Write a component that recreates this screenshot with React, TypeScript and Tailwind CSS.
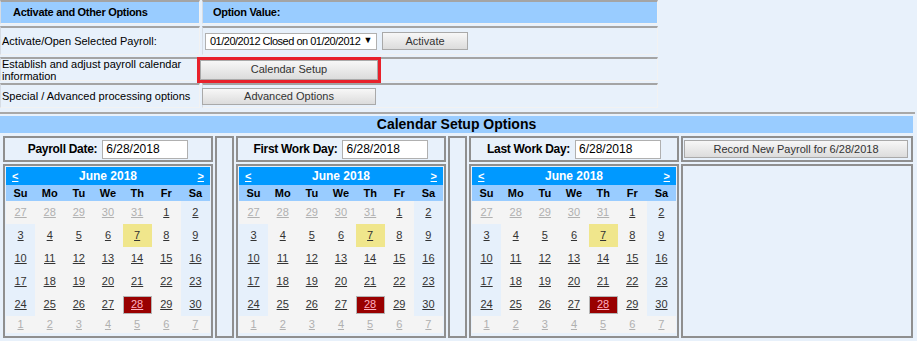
import React from 'react';

const weeks: number[][] = [
  [27, 28, 29, 30, 31, 1, 2],
  [3, 4, 5, 6, 7, 8, 9],
  [10, 11, 12, 13, 14, 15, 16],
  [17, 18, 19, 20, 21, 22, 23],
  [24, 25, 26, 27, 28, 29, 30],
  [1, 2, 3, 4, 5, 6, 7],
];
const dows = ['Su', 'Mo', 'Tu', 'We', 'Th', 'Fr', 'Sa'];

const Button = ({ label, className = '' }: { label: string; className?: string }) => (
  <button
    className={`flex items-center justify-center border border-[#a9a9a9] bg-gradient-to-b from-[#f7f7f7] to-[#dcdcdc] text-[11px] text-[#333] ${className}`}
  >
    {label}
  </button>
);

const Calendar = () => {
  return (
    <div className="w-[204px] text-[11px]">
      <div className="flex h-[18px] items-center justify-between bg-[#0099ff] px-[6px] font-bold text-white">
        <span className="underline">&lt;</span>
        <span className="text-[12px]">June 2018</span>
        <span className="underline">&gt;</span>
      </div>
      <div className="grid h-[16px] grid-cols-7 items-center bg-[#99ccff] font-bold text-black">
        {dows.map(d => (
          <div key={d} className="text-center">{d}</div>
        ))}
      </div>
      {weeks.map((week, wi) => (
        <div key={wi} className={`grid grid-cols-7 ${wi === 5 ? 'h-[17px]' : 'h-[23px]'}`}>
          {week.map((d, ci) => {
            const other = (wi === 0 && d > 20) || wi === 5;
            const weekend = ci === 0 || ci === 6;
            const today = wi === 1 && d === 7;
            const selected = wi === 4 && d === 28;
            let bg = 'bg-[#f4f4f4]';
            if (!other && weekend) bg = 'bg-[#e6f0fb]';
            if (today) bg = 'bg-[#f0e68c]';
            return (
              <div key={ci} className={`flex items-center justify-center ${bg}`}>
                {selected ? (
                  <div className="flex h-[18px] w-full items-center justify-center border border-[#b4b4b4] bg-[#990000] text-[#ffb0c0] underline">
                    {d}
                  </div>
                ) : (
                  <span className={`underline ${other ? 'text-[#b0b0b0]' : 'text-[#333]'}`}>{d}</span>
                )}
              </div>
            );
          })}
        </div>
      ))}
    </div>
  );
};

const DatePanel = ({ label }: { label: string }) => (
  <div className="flex w-[210px] flex-col gap-[2px]">
    <div className="flex h-[26px] items-center justify-center gap-[5px] border-2 border-[#8f8f8f] bg-[#e8f1fb]">
      <span className="text-[12px] font-bold tracking-[-0.3px] text-black">{label}</span>
      <div className="flex h-[19px] w-[86px] items-center border border-[#b0b0b0] bg-white pl-[3px] text-[12px] text-black">
        6/28/2018
      </div>
    </div>
    <div className="h-[174px] border-2 border-[#8f8f8f] bg-[#e8f1fb] p-px">
      <Calendar />
    </div>
  </div>
);

const Spacer = () => <div className="h-[202px] w-[19px] border-2 border-[#8f8f8f] bg-[#e8f1fb]" />;

const cell = 'border-t-2 border-l border-r border-b border-t-[#a4a4a4] border-l-[#d6dce4] border-r-[#f2f2f2] border-b-[#f2f2f2]';

const App = () => {
  return (
    <div className="h-[341px] w-[917px] overflow-hidden bg-[#e8f1fb] font-['Liberation_Sans',Arial,sans-serif] text-[11px] text-black">
      <div className="grid w-[658px] grid-cols-[200px_456px] grid-rows-[24px_29px_24px_25px] gap-[2px]">
        <div className={`${cell} flex items-center bg-[#99ccff] pl-[12px] text-[11px] font-bold tracking-[-0.3px]`}>Activate and Other Options</div>
        <div className={`${cell} flex items-center bg-[#99ccff] pl-[10px] text-[11px] font-bold tracking-[-0.3px]`}>Option Value:</div>

        <div className={`${cell} flex items-center pl-[1px]`}>Activate/Open Selected Payroll:</div>
        <div className={`${cell} flex items-center gap-[5px] pl-[2px]`}>
          <div className="flex h-[17px] w-[172px] items-center justify-between whitespace-nowrap border border-[#b0b0b0] bg-white pl-[4px] pr-[4px] text-[11px] tracking-[-0.5px]">
            <span>01/20/2012 Closed on 01/20/2012</span>
            <span className="text-[9px]">▼</span>
          </div>
          <Button label="Activate" className="h-[18px] w-[86px]" />
        </div>

        <div className={`${cell} flex items-center pl-[1px] leading-[12px]`}>Establish and adjust payroll calendar information</div>
        <div className={`${cell} flex items-center`}>
          <div className="ml-[-6px] border-[3px] border-[#e8212b]">
            <Button label="Calendar Setup" className="h-[20px] w-[178px]" />
          </div>
        </div>

        <div className={`${cell} flex items-center pl-[1px]`}>Special / Advanced processing options</div>
        <div className={`${cell} flex items-center`}>
          <Button label="Advanced Options" className="ml-[-1px] h-[17px] w-[174px]" />
        </div>
      </div>

      <div className="mt-[4px] h-[2px] w-[915px] bg-[#a8a8a8]" />
      <div className="mt-[2px] flex h-[17px] w-[913px] items-center justify-center bg-[#99ccff] text-[14px] font-bold">
        Calendar Setup Options
      </div>

      <div className="mt-[3px] flex gap-[2px] pl-[3px]">
        <DatePanel label="Payroll Date:" />
        <Spacer />
        <DatePanel label="First Work Day:" />
        <Spacer />
        <DatePanel label="Last Work Day:" />
        <div className="flex w-[232px] flex-col gap-[2px]">
          <div className="flex h-[26px] items-center border-2 border-[#8f8f8f] px-[1px]">
            <Button label="Record New Payroll for 6/28/2018" className="h-[18px] w-[224px]" />
          </div>
          <div className="h-[174px] border-2 border-[#8f8f8f] bg-[#e8f1fb]" />
        </div>
      </div>
    </div>
  );
};

export default App;
